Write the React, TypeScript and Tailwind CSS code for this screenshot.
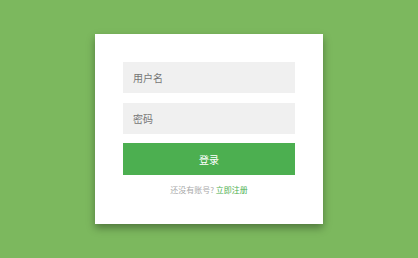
export default function App() {
  const font = { fontFamily: '"Noto Sans CJK SC", "Liberation Sans", sans-serif' };
  return (
    <div className="w-[418px] h-[258px] bg-[#7cb85e] flex justify-center pt-[34px]" style={font}>
      <div className="w-[228px] h-[190px] bg-white shadow-[0_4px_8px_rgba(0,0,0,0.35)] pt-[28px] px-[28px] flex flex-col">
        <div className="h-[31px] bg-[#f0f0f0] flex items-center pl-[10px] text-[10px] text-[#757575]">用户名</div>
        <div className="h-[31px] bg-[#f0f0f0] flex items-center pl-[10px] text-[10px] text-[#757575] mt-[10px]">密码</div>
        <div className="h-[32px] bg-[#4caf50] flex items-center justify-center text-[10px] text-white mt-[9px]">登录</div>
        <div className="mt-[9px] text-center text-[8px] text-[#aaaaaa]">
          还没有账号? <span className="text-[#4caf50]">立即注册</span>
        </div>
      </div>
    </div>
  );
}
